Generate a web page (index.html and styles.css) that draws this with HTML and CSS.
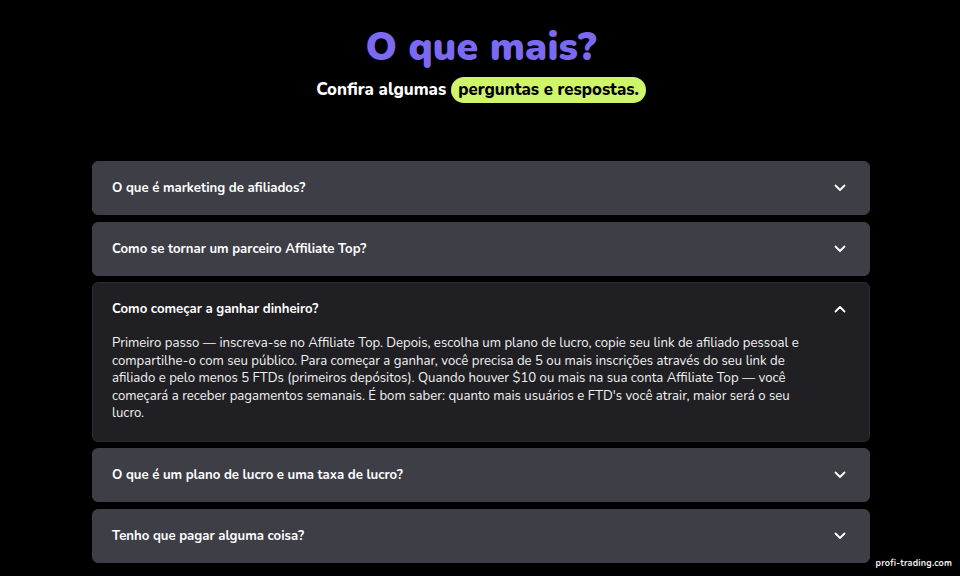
FILE: index.html
```html
<!DOCTYPE html>
<html lang="pt">
<head>
<meta charset="utf-8">
<title>O que mais?</title>
<link rel="stylesheet" href="styles.css">
</head>
<body>
<main class="faq">
  <header class="faq-head">
    <h1 class="faq-title">O que mais?</h1>
    <p class="faq-sub">Confira algumas <span class="pill">perguntas e respostas.</span></p>
  </header>
  <div class="faq-list">
    <div class="item">
      <div class="q"><span>O que é marketing de afiliados?</span><svg class="chev" viewBox="0 0 12 8"><path d="M1.5 1.5 6 6 10.5 1.5"/></svg></div>
    </div>
    <div class="item">
      <div class="q"><span>Como se tornar um parceiro Affiliate Top?</span><svg class="chev" viewBox="0 0 12 8"><path d="M1.5 1.5 6 6 10.5 1.5"/></svg></div>
    </div>
    <div class="item open">
      <div class="q"><span>Como começar a ganhar dinheiro?</span><svg class="chev" viewBox="0 0 12 8"><path d="M1.5 6.5 6 2 10.5 6.5"/></svg></div>
      <p class="a">Primeiro passo — inscreva-se no Affiliate Top. Depois, escolha um plano de lucro, copie seu link de afiliado pessoal e compartilhe-o com seu público. Para começar a ganhar, você precisa de 5 ou mais inscrições através do seu link de afiliado e pelo menos 5 FTDs (primeiros depósitos). Quando houver $10 ou mais na sua conta Affiliate Top — você começará a receber pagamentos semanais. É bom saber: quanto mais usuários e FTD's você atrair, maior será o seu lucro.</p>
    </div>
    <div class="item">
      <div class="q"><span>O que é um plano de lucro e uma taxa de lucro?</span><svg class="chev" viewBox="0 0 12 8"><path d="M1.5 1.5 6 6 10.5 1.5"/></svg></div>
    </div>
    <div class="item">
      <div class="q"><span>Tenho que pagar alguma coisa?</span><svg class="chev" viewBox="0 0 12 8"><path d="M1.5 1.5 6 6 10.5 1.5"/></svg></div>
    </div>
  </div>
</main>
<div class="watermark">profi-trading.com</div>
</body>
</html>
```

FILE: styles.css
```css
* { box-sizing: border-box; }
html, body { margin: 0; padding: 0; }
body {
  background: #000;
  color: #fff;
  font-family: "Nunito", "Lato", "Open Sans", sans-serif;
  width: 960px;
  height: 576px;
  overflow: hidden;
  position: relative;
}
.faq {
  padding: 24px 90px 0 92px;
}
.faq-head {
  display: flex;
  flex-direction: column;
  align-items: center;
}
.faq-title {
  margin: 0;
  font-size: 39px;
  line-height: 48px;
  font-weight: 900;
  color: #7b6af0;
  letter-spacing: 0.2px;
}
.faq-sub {
  margin: 5px 0 0;
  font-size: 16.8px;
  font-weight: 800;
  line-height: 26px;
  display: flex;
  align-items: center;
  gap: 5px;
}
.pill {
  background: #cff56b;
  color: #000;
  border-radius: 13px;
  padding: 0 7px;
  height: 26px;
  display: inline-flex;
  align-items: center;
}
.faq-list {
  margin-top: 58px;
  display: flex;
  flex-direction: column;
  gap: 6.5px;
}
.item {
  background: #3e3e46;
  border-radius: 6px;
  border: 1px solid #3e3e46;
}
.item.open {
  background: #202024;
  border-color: #2e2e33;
}
.q {
  height: 52px;
  display: flex;
  align-items: center;
  justify-content: space-between;
  padding: 0 23px 0 19px;
  font-size: 13.2px;
  font-weight: 700;
}
.chev {
  width: 12px;
  height: 8px;
  fill: none;
  stroke: #fff;
  stroke-width: 1.8;
  stroke-linecap: round;
  stroke-linejoin: round;
}
.a {
  margin: 0;
  padding: 0 52px 18px 19px;
  font-size: 13.2px;
  line-height: 17.5px;
  color: #f2f2f2;
}
.watermark {
  position: absolute;
  right: 8px;
  bottom: 7px;
  font-size: 9px;
  font-weight: 700;
  color: #eee;
  letter-spacing: 0.2px;
}
```
